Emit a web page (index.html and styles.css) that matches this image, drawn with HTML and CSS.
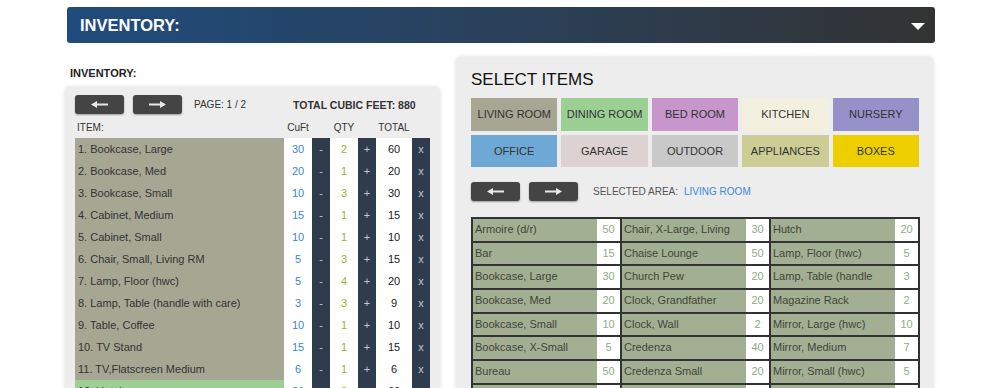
FILE: index.html
```html
<!DOCTYPE html>
<html lang="en">
<head>
    <meta charset="UTF-8">
    <meta name="viewport" content="width=device-width, initial-scale=1.0">
    <title>Inventory</title>
    <link rel="stylesheet" href="styles.css">
</head>
<body>
    <div class="page">
        <header class="bar-top">
            <h1 class="bar-title">INVENTORY:</h1>
            <span class="caret"></span>
        </header>
        <div class="content">
            <div class="inventory">
                <h4 class="label">INVENTORY:</h4>
                <div class="panel panel-left">
                    <div class="pager">
                        <button class="arrow-btn"><svg width="17" height="7" viewBox="0 0 17 7"><polygon points="0,3.5 6,0 6,7" fill="#e8e8e8"/><rect x="5" y="2.5" width="12" height="2" fill="#e8e8e8"/></svg></button>
                        <button class="arrow-btn"><svg width="17" height="7" viewBox="0 0 17 7"><polygon points="17,3.5 11,0 11,7" fill="#e8e8e8"/><rect x="0" y="2.5" width="12" height="2" fill="#e8e8e8"/></svg></button>
                        <span class="page-num">PAGE: 1 / 2</span>
                        <span class="total-feet">TOTAL CUBIC FEET: 880</span>
                    </div>
                    <table class="inv-table">
                        <colgroup>
                            <col style="width:209px"><col style="width:28px"><col style="width:18px"><col style="width:28px"><col style="width:18px"><col style="width:36px"><col style="width:18px">
                        </colgroup>
                        <thead>
                            <tr><th class="col-item">ITEM:</th><th>CuFt</th><th></th><th>QTY</th><th></th><th>TOTAL</th><th></th></tr>
                        </thead>
                        <tbody>
                            <tr><td class="item">1. Bookcase, Large</td><td class="cuft">30</td><td class="btn">-</td><td class="qty">2</td><td class="btn">+</td><td class="total">60</td><td class="btn">x</td></tr>
                            <tr><td class="item">2. Bookcase, Med</td><td class="cuft">20</td><td class="btn">-</td><td class="qty">1</td><td class="btn">+</td><td class="total">20</td><td class="btn">x</td></tr>
                            <tr><td class="item">3. Bookcase, Small</td><td class="cuft">10</td><td class="btn">-</td><td class="qty">3</td><td class="btn">+</td><td class="total">30</td><td class="btn">x</td></tr>
                            <tr><td class="item">4. Cabinet, Medium</td><td class="cuft">15</td><td class="btn">-</td><td class="qty">1</td><td class="btn">+</td><td class="total">15</td><td class="btn">x</td></tr>
                            <tr><td class="item">5. Cabinet, Small</td><td class="cuft">10</td><td class="btn">-</td><td class="qty">1</td><td class="btn">+</td><td class="total">10</td><td class="btn">x</td></tr>
                            <tr><td class="item">6. Chair, Small, Living RM</td><td class="cuft">5</td><td class="btn">-</td><td class="qty">3</td><td class="btn">+</td><td class="total">15</td><td class="btn">x</td></tr>
                            <tr><td class="item">7. Lamp, Floor (hwc)</td><td class="cuft">5</td><td class="btn">-</td><td class="qty">4</td><td class="btn">+</td><td class="total">20</td><td class="btn">x</td></tr>
                            <tr><td class="item">8. Lamp, Table (handle with care)</td><td class="cuft">3</td><td class="btn">-</td><td class="qty">3</td><td class="btn">+</td><td class="total">9</td><td class="btn">x</td></tr>
                            <tr><td class="item">9. Table, Coffee</td><td class="cuft">10</td><td class="btn">-</td><td class="qty">1</td><td class="btn">+</td><td class="total">10</td><td class="btn">x</td></tr>
                            <tr><td class="item">10. TV Stand</td><td class="cuft">15</td><td class="btn">-</td><td class="qty">1</td><td class="btn">+</td><td class="total">15</td><td class="btn">x</td></tr>
                            <tr><td class="item">11. TV,Flatscreen Medium</td><td class="cuft">6</td><td class="btn">-</td><td class="qty">1</td><td class="btn">+</td><td class="total">6</td><td class="btn">x</td></tr>
                            <tr><td class="item dining">12. Hutch</td><td class="cuft">20</td><td class="btn">-</td><td class="qty">3</td><td class="btn">+</td><td class="total">60</td><td class="btn">x</td></tr>
                        </tbody>
                    </table>
                </div>
            </div>

            <div class="panel panel-right">
                <h2 class="select-title">SELECT ITEMS</h2>
                <ul class="rooms">
                    <li class="living">LIVING ROOM</li>
                    <li class="dining">DINING ROOM</li>
                    <li class="bed">BED ROOM</li>
                    <li class="kitchen">KITCHEN</li>
                    <li class="nursery">NURSERY</li>
                    <li class="office">OFFICE</li>
                    <li class="garage">GARAGE</li>
                    <li class="outdoor">OUTDOOR</li>
                    <li class="appliances">APPLIANCES</li>
                    <li class="boxes">BOXES</li>
                </ul>
                <div class="pager pager-right">
                    <button class="arrow-btn"><svg width="17" height="7" viewBox="0 0 17 7"><polygon points="0,3.5 6,0 6,7" fill="#e8e8e8"/><rect x="5" y="2.5" width="12" height="2" fill="#e8e8e8"/></svg></button>
                    <button class="arrow-btn"><svg width="17" height="7" viewBox="0 0 17 7"><polygon points="17,3.5 11,0 11,7" fill="#e8e8e8"/><rect x="0" y="2.5" width="12" height="2" fill="#e8e8e8"/></svg></button>
                    <span class="area">SELECTED AREA:</span>
                    <span class="area-name">LIVING ROOM</span>
                </div>
                <div class="items">
                    <div class="item-cell"><span class="name">Armoire (d/r)</span><span class="cf">50</span></div>
                    <div class="item-cell"><span class="name">Chair, X-Large, Living</span><span class="cf">30</span></div>
                    <div class="item-cell"><span class="name">Hutch</span><span class="cf">20</span></div>
                    <div class="item-cell"><span class="name">Bar</span><span class="cf">15</span></div>
                    <div class="item-cell"><span class="name">Chaise Lounge</span><span class="cf">50</span></div>
                    <div class="item-cell"><span class="name">Lamp, Floor (hwc)</span><span class="cf">5</span></div>
                    <div class="item-cell"><span class="name">Bookcase, Large</span><span class="cf">30</span></div>
                    <div class="item-cell"><span class="name">Church Pew</span><span class="cf">20</span></div>
                    <div class="item-cell"><span class="name">Lamp, Table (handle</span><span class="cf">3</span></div>
                    <div class="item-cell"><span class="name">Bookcase, Med</span><span class="cf">20</span></div>
                    <div class="item-cell"><span class="name">Clock, Grandfather</span><span class="cf">20</span></div>
                    <div class="item-cell"><span class="name">Magazine Rack</span><span class="cf">2</span></div>
                    <div class="item-cell"><span class="name">Bookcase, Small</span><span class="cf">10</span></div>
                    <div class="item-cell"><span class="name">Clock, Wall</span><span class="cf">2</span></div>
                    <div class="item-cell"><span class="name">Mirror, Large (hwc)</span><span class="cf">10</span></div>
                    <div class="item-cell"><span class="name">Bookcase, X-Small</span><span class="cf">5</span></div>
                    <div class="item-cell"><span class="name">Credenza</span><span class="cf">40</span></div>
                    <div class="item-cell"><span class="name">Mirror, Medium</span><span class="cf">7</span></div>
                    <div class="item-cell"><span class="name">Bureau</span><span class="cf">50</span></div>
                    <div class="item-cell"><span class="name">Credenza Small</span><span class="cf">20</span></div>
                    <div class="item-cell"><span class="name">Mirror, Small (hwc)</span><span class="cf">5</span></div>
                    <div class="item-cell"><span class="name">Cabinet, Curio</span><span class="cf">20</span></div>
                    <div class="item-cell"><span class="name">Desk, Secretary</span><span class="cf">40</span></div>
                    <div class="item-cell"><span class="name">Piano, Spinet</span><span class="cf">60</span></div>
                </div>
            </div>
        </div>
    </div>
</body>
</html>
```

FILE: styles.css
```css
* {
    margin: 0;
    padding: 0;
    box-sizing: border-box;
}
body {
    background-color: #fff;
    font-family: 'Liberation Sans', Arial, sans-serif;
    color: #333;
}
.page {
    padding: 7px 0 0 65px;
    width: 935px;
}
.bar-top {
    margin-left: 2px;
    height: 36px;
    display: flex;
    align-items: center;
    justify-content: space-between;
    padding: 0 10px 0 13px;
    border-radius: 3px;
    background: linear-gradient(to right, #1f4c7d 0%, #29425e 45%, #333 100%);
}
.bar-title {
    color: white;
    font-size: 16.5px;
    font-weight: bold;
}
.caret {
    border-left: 7.5px solid transparent;
    border-right: 7.5px solid transparent;
    border-top: 7px solid white;
    margin-top: 2px;
}
.content {
    display: flex;
    gap: 16px;
    margin-top: 14px;
    align-items: flex-start;
}
.inventory {
    width: 375px;
    padding-top: 9px;
}
.label {
    font-size: 11px;
    line-height: 14px;
    padding-left: 5px;
    margin-bottom: 7px;
    color: #222;
}
.panel {
    background-color: #ededed;
    border-radius: 5px;
    box-shadow: 0 0 4px rgba(0, 0, 0, .15);
}
.panel-left {
    padding: 8px 10px 10px;
}
.pager {
    display: flex;
    align-items: center;
    height: 19px;
}
.arrow-btn {
    width: 49px;
    height: 19px;
    border: none;
    border-radius: 3px;
    background-color: #444;
    display: flex;
    align-items: center;
    justify-content: center;
    box-shadow: 0 1px 2px rgba(0, 0, 0, .35);
}
.arrow-btn + .arrow-btn {
    margin-left: 9px;
}
.page-num {
    margin-left: 12px;
    font-size: 10px;
}
.total-feet {
    margin-left: 47px;
    font-size: 10.5px;
    font-weight: bold;
}
.inv-table {
    border-collapse: collapse;
    table-layout: fixed;
    width: 355px;
    font-size: 11px;
}
.inv-table th {
    font-weight: normal;
    font-size: 10px;
    line-height: 14px;
    padding: 7px 0 3px;
    text-align: center;
}
.inv-table th.col-item {
    text-align: left;
    padding-left: 2px;
}
.inv-table td {
    height: 22px;
    padding: 0;
    text-align: center;
    background-color: white;
    white-space: nowrap;
}
.inv-table td.item {
    text-align: left;
    padding-left: 3px;
    background-color: #a6a793;
    color: #333;
}
.inv-table td.item.dining {
    background-color: #9ccf94;
}
.cuft {
    color: #3b88d8;
}
.qty {
    color: #93b82f;
}
.total {
    color: #222;
}
.inv-table td.btn {
    background-color: #2f3c4e;
    color: #c3c7cc;
}

/* right side */
.panel-right {
    width: 477px;
    padding: 13px 14px 20px 15px;
}
.select-title {
    font-size: 17px;
    font-weight: normal;
    line-height: 20px;
    color: #111;
    margin-bottom: 8px;
}
.rooms {
    list-style: none;
    display: grid;
    grid-template-columns: repeat(5, minmax(0, 1fr));
    gap: 4px;
    width: 448px;
}
.rooms li {
    height: 32.5px;
    display: flex;
    align-items: center;
    justify-content: center;
    font-size: 11px;
    color: #333;
}
.living { background-color: #a6a692; }
.dining { background-color: #9ccf94; }
.bed { background-color: #c696cc; }
.kitchen { background-color: #f3f0e0; }
.nursery { background-color: #9691c9; }
.office { background-color: #6ea8d5; }
.garage { background-color: #ddd2d1; }
.outdoor { background-color: #c9c9c9; }
.appliances { background-color: #cbcd94; }
.boxes { background-color: #edcf00; }
.pager-right {
    margin-top: 15px;
}
.area {
    margin-left: 15px;
    font-size: 10px;
    color: #555;
}
.area-name {
    margin-left: 6px;
    font-size: 10px;
    color: #3b88d8;
}
.items {
    margin-top: 16px;
    width: 449px;
    display: grid;
    grid-template-columns: repeat(3, minmax(0, 1fr));
    gap: 2px;
    padding: 2px;
    background-color: #333;
}
.item-cell {
    display: flex;
    height: 21.7px;
    font-size: 11px;
    line-height: 21.7px;
    min-width: 0;
}
.item-cell .name {
    flex: 1;
    min-width: 0;
    background-color: #a3af93;
    color: #3f4538;
    padding-left: 2px;
    white-space: nowrap;
    overflow: hidden;
}
.item-cell .cf {
    width: 23px;
    background-color: white;
    color: #8fab87;
    text-align: center;
}
```
